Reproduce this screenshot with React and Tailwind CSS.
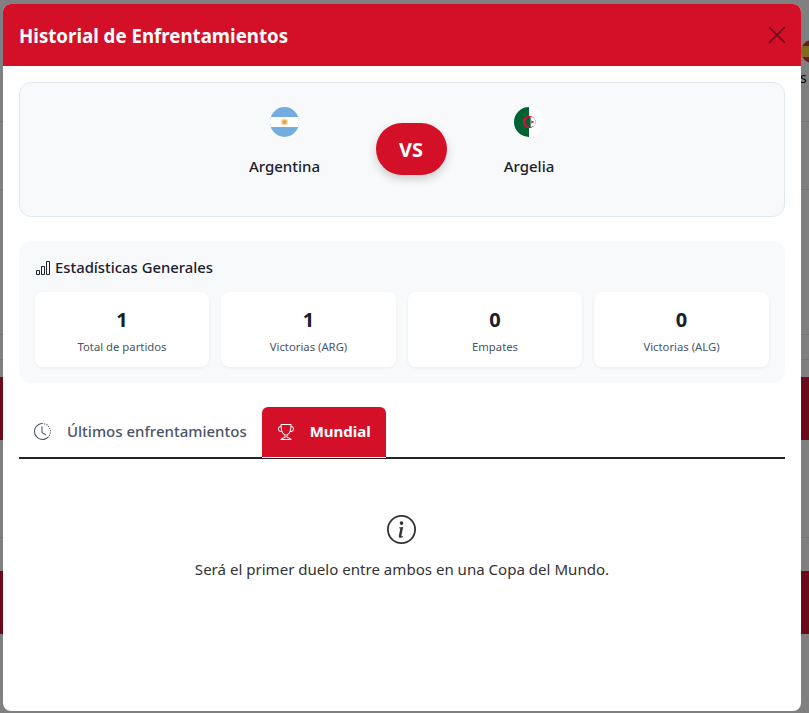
import React from "react";
import { BsBarChart, BsClockHistory, BsTrophy, BsInfoCircle } from "react-icons/bs";

const font = { fontFamily: '"Noto Sans", "Open Sans", sans-serif' };

function ArgFlag() {
  return (
    <svg width="29" height="30" viewBox="0 0 29 30">
      <defs>
        <clipPath id="ca"><ellipse cx="14.5" cy="15" rx="14.5" ry="15" /></clipPath>
      </defs>
      <g clipPath="url(#ca)">
        <rect width="29" height="30" fill="#74acdf" />
        <rect y="10" width="29" height="10" fill="#ffffff" />
        <circle cx="14.5" cy="15" r="3.6" fill="#f6d9a8" />
        <circle cx="14.5" cy="15" r="2.1" fill="#e8a22e" />
      </g>
    </svg>
  );
}

function AlgFlag() {
  return (
    <svg width="30" height="30" viewBox="0 0 30 30">
      <defs>
        <clipPath id="cb"><circle cx="15" cy="15" r="15" /></clipPath>
      </defs>
      <g clipPath="url(#cb)">
        <rect width="15" height="30" fill="#006233" />
        <rect x="15" width="15" height="30" fill="#ffffff" />
        <circle cx="15" cy="15" r="6.2" fill="#d21034" />
        <circle cx="16.6" cy="15" r="5" fill="#006233" />
        <path d="M16.6 10 A5 5 0 0 1 16.6 20 Z" fill="#ffffff" />
        <polygon points="20.5,15 17,16.6 18,13.2 18,16.8 17,13.4" fill="#d21034" />
      </g>
    </svg>
  );
}

function Stat({ value, label, wide }) {
  return (
    <div className={`${wide ? "w-[175px]" : "w-[174px]"} h-[75px] bg-white rounded-lg shadow-[0_1px_3px_rgba(0,0,0,0.06)] flex flex-col items-center pt-[14px]`}>
      <div className="text-[20px] leading-[28px] font-bold text-[#1a202c]">{value}</div>
      <div className="text-[11.3px] leading-[16px] mt-[5px] text-[#4a5568]">{label}</div>
    </div>
  );
}

function Backdrop() {
  return (
    <div className="h-[713px] flex flex-col bg-[#808080]">
      <div className="h-[122px] shrink-0 border-b border-[#757575] bg-[#808080]" />
      <div className="h-[68px] shrink-0 border-b border-[#757575]" />
      <div className="h-[145px] shrink-0 border-b border-[#757575]" />
      <div className="h-[25px] shrink-0 border-b border-[#757575]" />
      <div className="h-[17px] shrink-0" />
      <div className="h-[63px] shrink-0 bg-[#6b0a1a]" />
      <div className="h-[98px] shrink-0 border-b border-[#757575]" />
      <div className="h-[33px] shrink-0" />
      <div className="h-[63px] shrink-0 bg-[#6b0a1a]" />
    </div>
  );
}

export default function App() {
  return (
    <div className="relative w-[809px] h-[713px] overflow-hidden" style={font}>
      <Backdrop />
      <div className="absolute right-0 top-[40px] w-[8px] h-[23px] overflow-hidden">
        <div className="w-[24px] h-[23px] rounded-full overflow-hidden flex flex-col">
          <div className="h-[6px] bg-[#6e1a1a]" />
          <div className="h-[11px] bg-[#7f6a20]" />
          <div className="h-[6px] bg-[#6e1a1a]" />
        </div>
      </div>
      <div className="absolute right-0 top-[68px] w-[8px] overflow-hidden text-[14px] leading-[20px] text-black text-left">
        <span className="block -ml-[1px]">s</span>
      </div>

      <div className="absolute left-[3px] top-[4px] w-[798px] h-[707px] bg-white rounded-lg overflow-hidden">
        <div className="h-[62px] bg-[#d31027] flex items-center justify-between pl-4 pr-[15px]">
          <h2 className="text-[18.7px] leading-[28px] pt-[1px] font-bold text-white">Historial de Enfrentamientos</h2>
          <svg width="18" height="18" viewBox="0 0 16 16" fill="none" stroke="#6f0a18" strokeWidth="1.35">
            <path d="M1 1 L15 15 M15 1 L1 15" />
          </svg>
        </div>

        <div className="px-4 pt-4">
          <div className="h-[135px] bg-[#f8f9fb] border border-[#e2e8f0] rounded-xl flex justify-center pt-[24px]">
            <div className="flex flex-col items-center w-[72px] mr-[55px]">
              <ArgFlag />
              <div className="mt-[18px] text-[15px] leading-[22px] font-medium text-[#1a202c]">Argentina</div>
            </div>
            <div className="w-[71px] h-[52px] mt-[16px] pt-[1px] rounded-[26px] bg-[#d31027] shadow-[0_4px_10px_rgba(0,0,0,0.18)] flex items-center justify-center text-white font-bold text-[20px]">
              VS
            </div>
            <div className="flex flex-col items-center w-[53px] ml-[56px]">
              <AlgFlag />
              <div className="mt-[18px] text-[15px] leading-[22px] font-medium text-[#1a202c]">Argelia</div>
            </div>
          </div>

          <div className="mt-6 h-[142px] bg-[#f8f9fb] rounded-xl p-4">
            <div className="flex items-center gap-[4px] h-[21px]">
              <BsBarChart className="w-4 h-4 text-[#1a202c]" />
              <span className="text-[14.85px] leading-[20px] -mt-[1px] font-medium text-[#1a202c]">Estadísticas Generales</span>
            </div>
            <div className="mt-[14px] flex gap-3">
              <Stat value="1" label="Total de partidos" />
              <Stat value="1" label="Victorias (ARG)" wide />
              <Stat value="0" label="Empates" />
              <Stat value="0" label="Victorias (ALG)" wide />
            </div>
          </div>

          <div className="mt-6 flex border-b-2 border-[#212529] h-[52px]">
            <div className="h-[48px] flex items-center pl-[15px] pr-4 gap-4 text-[#4a5568] font-medium text-[15px]">
              <BsClockHistory className="w-[17px] h-[17px]" />
              <span>Últimos enfrentamientos</span>
            </div>
            <div className="relative h-[51px] w-[124px] -ml-[1px] bg-[#d31027] rounded-t-md border-b border-white flex items-center pl-4 pb-[1px] gap-[16px] text-white font-bold text-[15px]">
              <BsTrophy className="w-4 h-4" />
              <span>Mundial</span>
            </div>
          </div>

          <div className="mt-[56px] flex flex-col items-center text-[#333]">
            <BsInfoCircle className="w-[29px] h-[29px] mr-[1px]" />
            <p className="mt-[13px] text-[15.07px] leading-[24px]">Será el primer duelo entre ambos en una Copa del Mundo.</p>
          </div>
        </div>
      </div>
    </div>
  );
}
